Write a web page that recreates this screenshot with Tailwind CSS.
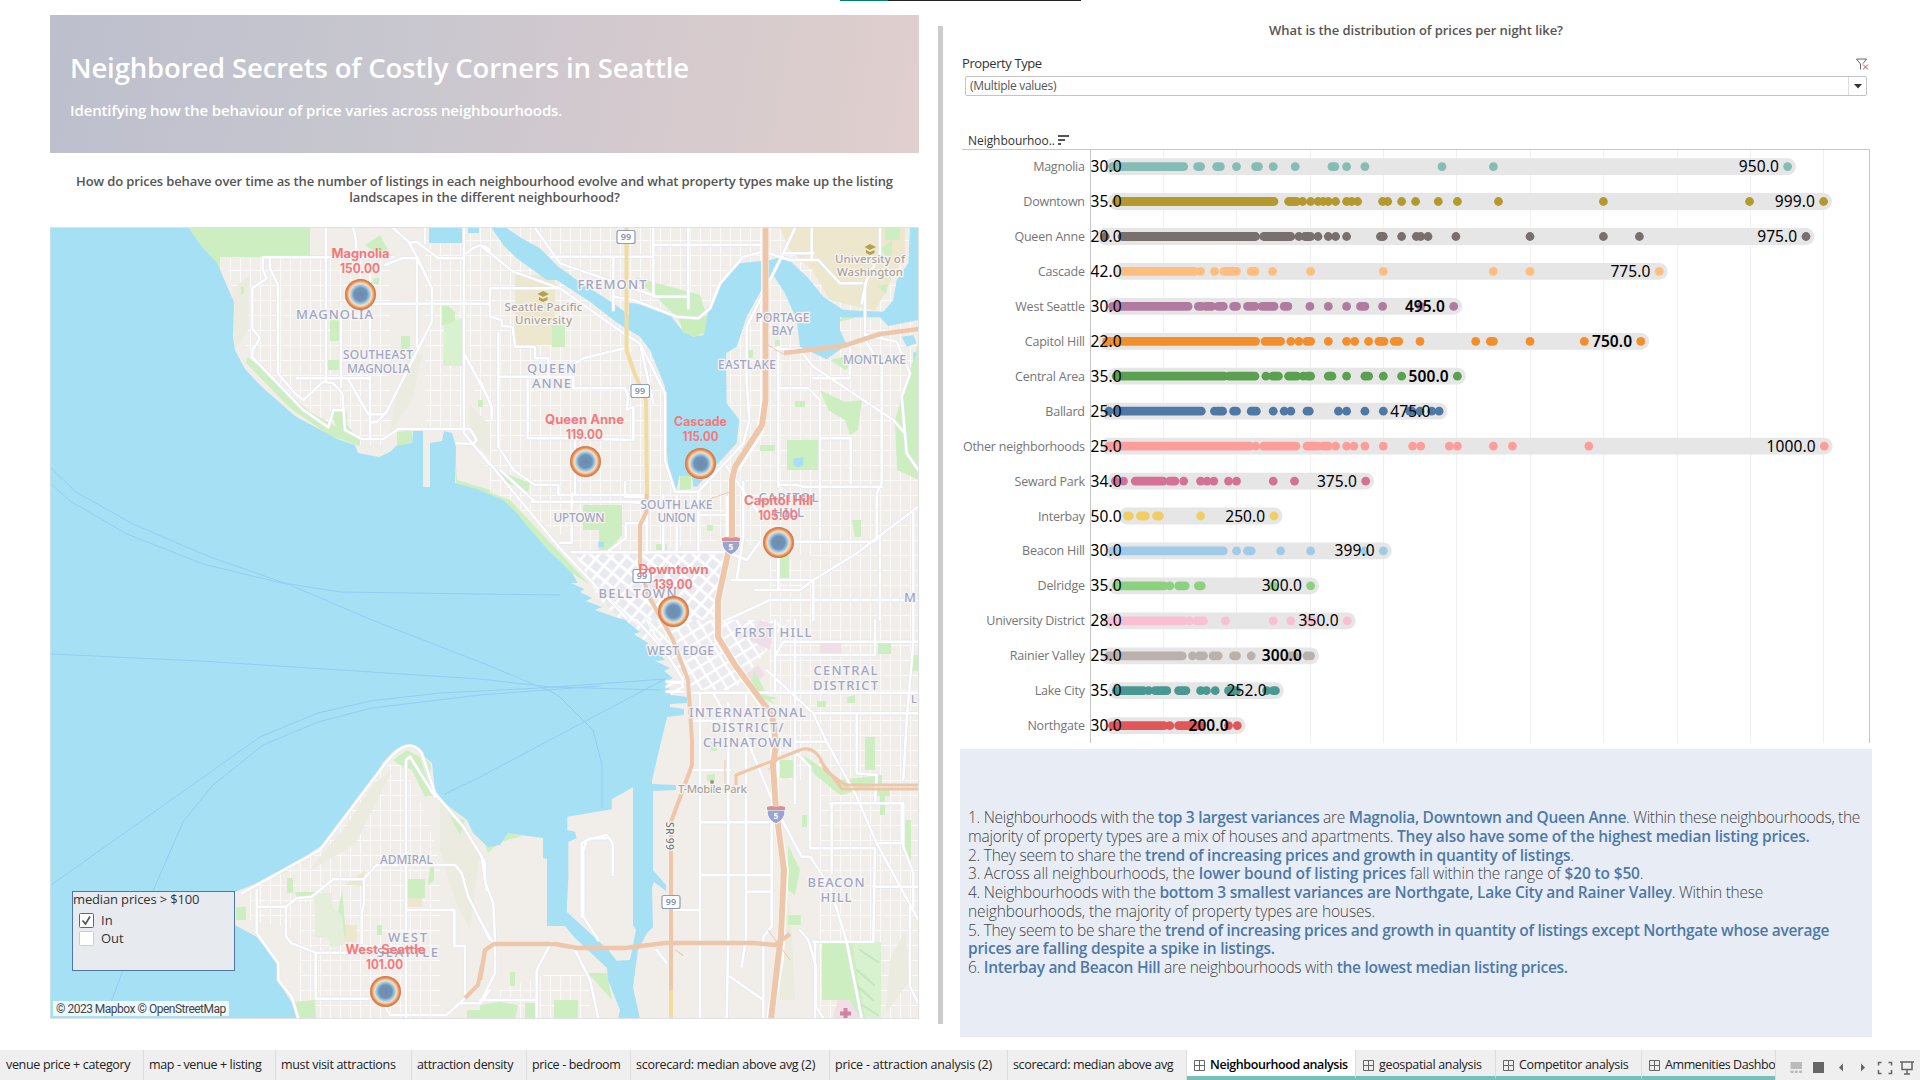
<!DOCTYPE html>
<html lang="en">
<head>
<meta charset="utf-8">
<title>Neighbourhood analysis</title>
<script src="https://cdn.jsdelivr.net/npm/@tailwindcss/browser@4"></script>
</head>
<body class="w-[1920px] h-[1080px] overflow-hidden bg-white flex flex-col font-['Open_Sans','Noto_Sans',sans-serif] text-[#333]">
<div class="flex h-px pl-[840px] shrink-0"><div class="w-12 bg-[#00816f]"></div><div class="w-[193px] bg-[#222]"></div></div>
<main class="flex h-[1049px] shrink-0">
  <section class="ml-[50px] w-[869px] pt-[14px] flex flex-col shrink-0">
    <header class="h-[138px] shrink-0 bg-linear-[100deg,#bdbfcd,#c8c7cf_40%,#d2c9ce_62%,#e0cfcd] text-white pl-5 pt-[33px] flex flex-col items-start whitespace-nowrap">
      <h1 class="text-[27.500px] leading-[40px] font-semibold tracking-[-0.14px]">Neighbored Secrets of Costly Corners in Seattle</h1>
      <p class="mt-[11px] text-[15px] leading-[22px] font-semibold tracking-[-0.13px]">Identifying how the behaviour of price varies across neighbourhoods.</p>
    </header>
    <div class="h-[74px] shrink-0 pt-[20px] text-[13px] leading-4 font-semibold text-[#555] flex flex-col items-center whitespace-nowrap tracking-[-0.13px]">
      <span>How do prices behave over time as the number of listings in each neighbourhood evolve and what property types make up the listing</span>
      <span class="tracking-[-0.08px]">landscapes in the different neighbourhood?</span>
    </div>
    <div class="relative h-[792px] w-[869px] shrink-0">
      <svg class="block" width="869" height="792" viewBox="50 227 869 792" stroke-linejoin="round" stroke-linecap="round">
        <defs>
          <pattern id="grid" width="10" height="15" patternUnits="userSpaceOnUse"><path d="M0 0H10M0 0V15" stroke="#fff" stroke-width="1.5" fill="none"/></pattern>
          <pattern id="diag" width="11" height="11" patternUnits="userSpaceOnUse" patternTransform="rotate(40)"><path d="M0 0H11M0 0V11" stroke="#fff" stroke-width="5.5" fill="none"/></pattern>
          <pattern id="diag2" width="11" height="11" patternUnits="userSpaceOnUse" patternTransform="rotate(58)"><path d="M0 0H11M0 0V11" stroke="#fff" stroke-width="4.5" fill="none"/></pattern>
          <radialGradient id="dot"><stop offset="0" stop-color="#6d8cae"/><stop offset=".42" stop-color="#6f93b8"/><stop offset=".6" stop-color="#a5cbe3"/><stop offset=".7" stop-color="#dfe3dc"/><stop offset=".77" stop-color="#fbc98d"/><stop offset=".87" stop-color="#ee8e52"/><stop offset="1" stop-color="#c2714f"/></radialGradient>
          <g id="roads">
            <g transform="translate(40 220) scale(.33333)">
              <path d="M668 112H1060M668 112V150L680 175L637 205V325L660 355L637 390V412L790 570L865 622L880 570H910M690 112V145L714 195V460L765 520L790 540L850 485L880 490L907 520L915 630L965 657H1030L1075 627H1290L1310 660L1300 672L1250 670M858 24V482M770 475H990M903 250V500M990 140V650M925 478L985 583H1030M1000 251H1350M1131 110V380M1130 110L1176 205V305L1040 575L1010 607H990M1035 135L1085 115H1135M940 24L948 60V112M1060 24L1108 68L1130 110M1108 68L1130 65L1195 115H1272M1155 24V70M1272 24V640L1350 735M1272 400L1350 545M1280 100Q1320 60 1350 90"/>
            </g>
            <g transform="translate(480 220) scale(.33333)">
              <path d="M0 75L100 155L240 205L430 340L480 370L555 520V720L585 815H655L790 670L808 600L800 480V320L905 110L945 24M165 24L240 130L400 185L530 230H625M30 205H220L240 205M30 205V290L65 300V318L98 320L105 380H165V415H205V470H55M55 340V680L100 750L165 795H235V825H500M0 480L35 560V600M213 110H520M400 110V270M520 24V230M520 75H850M625 24V265M400 230L460 240L590 290L655 295L690 265L720 190L790 110L850 95L930 120H1015L1080 190H1145M995 24V120M1145 250L1160 180L1200 100V24M1155 190V345M1155 360L1205 440V790L1190 820V955M1155 345L1250 365L1290 460L1265 530L1280 700L1315 750M895 380V800M865 385L960 390L1000 440L1240 600L1275 640M895 505H985L1020 540V955M1020 655H1112V790M895 795H950L970 800H1205M1110 380V475H1000M480 370L500 460L520 550M0 695L240 985L440 1195M60 750L165 845H500M285 655V820M143 480V655H285L460 660V560L440 570L445 530L435 505H280V470H205M285 430L310 415L435 385M155 845H430L500 850M275 997H745M240 968H275V820M435 785V830H500M500 910H437V955L380 997M550 825V990M590 825V995M655 820V998M655 885H740M740 830V960M500 850V1000M790 785V950L770 1080M755 1080H1000L1130 1000L1315 860M870 965H1180L1190 960M745 998L800 1020L840 965M740 740L850 900M865 1140H1315M895 1000V1110M825 1110H960L1000 1080M1200 950V1200M1000 1080V1200M1300 870V1200M740 1200L870 1140M910 100H1000"/>
            </g>
            <g transform="translate(40 620) scale(.33333)">
              <path d="M605 820L840 690L1040 425Q1105 345 1145 400L1185 520L1270 620L1325 710L1340 810M1098 1195V420L1110 410L1185 530M650 810V940L715 1030V1080L755 1130L775 1195M650 860H738L770 835L815 830L880 778H970L1010 735H1245L1265 760L1285 830L1350 960M972 778V850L965 880V970M738 860V950L755 970L827 998H1010M827 998V1136H1030M1100 870H1243V978H1275V1130M1030 1150L1050 1185H1220L1280 1130M1260 1150H1320L1350 1110"/>
            </g>
            <g transform="translate(480 620) scale(.33333)">
              <path d="M0 700L15 730V785L40 850L45 960V1060L0 1150M0 900L40 970M0 1140H170M170 1195V1050L215 965L285 990L330 1080L355 1195M355 960L310 890V690L320 660L380 645L398 670V765M380 655L330 655L305 670V890M660 220V1195M745 250V940L740 1195M798 220V955L785 1040M875 550V920L850 950V1195M630 218H1315M640 450H750M665 607H870M665 765H875M800 815H875M580 870H655M640 302H745M798 350L830 430L885 560L965 710H990L1050 800L1100 965L1145 1195M945 365H1040M885 0V215M860 150L1000 280L1040 365L1130 530L1190 670L1315 900M1185 0V105H890M890 100L910 65H1315M1000 280H1315M1050 550H1265V670H1190M990 685H1185L1180 960M990 685V440L950 400M1055 550V760M1300 0V65L1280 300L1270 480M1130 285V460L1190 465L1185 550M1315 800H1180M1000 965H1180M1005 970V1195M750 1070L850 1140M960 930L985 960L1008 1040V1160L1030 1195M530 990L560 1030M1290 860V1100L1315 1150M1270 550V680L1300 760V860M560 185H610M560 215H610M560 200Q600 175 610 200L575 220M700 220L745 300M470 0L560 100L610 180M500 0L590 90M945 0V550"/>
            </g>
          </g>
        </defs>
        <rect x="50" y="227" width="869" height="792" fill="#f1eeea"/>
        <!-- minor street grids -->
        <path fill="url(#grid)" d="M225 258H390V445H340L250 365ZM450 228H919V560H840L720 540L600 560L490 490ZM330 790L400 760L420 800L440 860V1019H300V930L250 920V890ZM770 560H919V1019H820V780H770ZM545 975H590V1019H500V990ZM425 228H465V430H425Z"/>
        <path fill="#ebebdf" d="M372 785L392 770L380 795L355 845L310 870L325 850L345 828ZM440 800L460 815L480 850L470 930L455 900L440 850ZM232 290L250 275L248 330L235 350ZM410 350L422 355L412 400L395 425L390 435L394 405ZM470 405L490 425V455L470 440ZM780 860L790 900L795 1000H780ZM890 960L905 930L910 980L885 1015Z"/>
        <!-- downtown street grid -->
        <path fill="#e9e9f0" d="M575 553H730L700 635L650 640L610 610Z"/>
        <path fill="url(#diag)" d="M575 553H730L712 640H640L600 600Z"/>
        <path fill="#ecebef" d="M645 620H780L735 690H690Z"/><path fill="url(#diag2)" d="M645 620H790L735 690H690Z"/>
        <!-- campuses, plazas -->
        <path fill="#ece7cd" d="M780 228H905V255L875 311L830 300L812 270L790 250ZM515 275H555V345H515ZM345 885L365 870V886ZM345 925H357V942H342ZM408 895H422V907H408Z"/>
        <path fill="#f0dfe6" d="M750 640L760 620L775 625L770 650ZM745 675L758 665L765 675L752 685ZM820 642H841V654H820ZM838 1000H862V1019H832Z"/>
        <!-- parks -->
        <g fill="#cdeec0">
          <path d="M188 227H310V257H220V275L200 245Z"/>
          <path d="M248 357L310 412L360 440V446L330 436L290 408L246 363ZM330 412H347V425L358 438L345 440L338 430ZM397 432L412 430V443L397 447ZM330 320H339V341H330ZM328 360H340V370H328ZM241 287H244V294H241ZM401 336H410V350H401ZM442 306H449L455 312V325H442ZM365 245L380 235L388 250L375 252ZM374 278H380L378 285L372 283ZM478 400H483V407H478Z"/>
          <path d="M552 325H565V347H552ZM497 470L530 483L528 492L505 482ZM480 489L510 500L590 585L560 565L520 520L480 495ZM455 450L457 480L490 490V496L456 484ZM583 505H622V535L610 550H599V530H583ZM656 544H667V550H656ZM707 525H713V531H707ZM748 350H753V358H748ZM787 440H820V470H787ZM795 401H805V407H795ZM852 520H861V537H855ZM780 555H789V578H780ZM820 390L845 402L862 400L858 430L850 435L845 420L828 410ZM895 420L919 340V480L897 470ZM845 370L862 360L850 355L830 360ZM848 310L838 322L855 318ZM680 472H687V490H680ZM760 445H775V451H760ZM775 340H780V346H775ZM880 250L892 240V260ZM878 286L888 284L886 294ZM885 228H900V240H885ZM635 277L700 295L705 310L700 335L688 335L680 320ZM555 262L600 300L580 285Z"/>
          <path d="M835 942H880V1019H860L850 1000H822V942ZM780 760H793V778H780ZM788 845L800 870L795 895L788 890ZM788 915H801V925H788ZM803 755L840 780L882 775V785L840 795L815 775ZM865 737H875V770H865ZM878 643H891V654H878ZM912 655H919V671H912ZM905 820H911V861L905 850ZM880 795H885V815H880ZM877 790H890V796H877ZM817 701H826V707H817ZM847 697L855 695V703H847ZM802 815H807V827H802ZM707 775L715 774V781H707ZM711 742H717V751H711ZM754 670L768 697L775 705L750 690ZM763 695L778 698L770 700ZM484 840L510 833L522 836L500 842L488 853ZM480 1005L500 1002L518 1005L515 1019H480ZM525 1003H535V1019H525ZM554 1000H578V1019H554ZM588 973H607L612 1000ZM510 972H515V986H510Z"/>
          <path d="M393 760L407 750L420 757L433 795L425 797L412 770L400 765ZM425 757L431 765L430 775ZM236 892L280 872L320 845L285 872ZM287 878H293V893H287ZM408 879H425V898H408ZM430 867H434V880L428 886ZM236 907H246V920H236ZM377 925H382V935H377ZM293 1002L315 1000L316 1019H297ZM467 1010H490V1019H467ZM450 817L465 820L460 835ZM295 892H316L315 897H297ZM342 890L346 935L340 946L332 945Z"/>
        </g>
        <path fill="#e4eedb" d="M313 893H332V907L342 915L345 945L330 947L329 938L315 937V908Z"/>
        <path fill="#d8f1cf" d="M444 325L462 318V366H443ZM852 942H881V1018H865Z"/>
        <path stroke="#b9e3b0" stroke-width="2" fill="none" opacity=".7" d="M860 950L878 962M857 970L874 985M856 985L873 1000M862 1005L878 1015"/>
        <!-- water -->
        <g fill="#a6e0f5">
          <path d="M50 227H188L202 247L217 263L234 302L233 337L235 350L245 369L262 387L295 416L337 439L355 445L358 453L379 457L390 452L396 446L412 443L413 431H423V487H430V443L442 441L444 431L452 433L456 447L455 483L477 489L503 500L517 513L527 526L548 550L572 573L578 583H571L584 589L580 592L592 598L586 601L602 607L595 610L612 616L625 620L640 632L634 634L648 643L645 647L658 652L665 660L655 661L670 668L664 671L673 678L666 682L672 695L687 697V703L670 704V707L684 709V715L667 717L652 780V784L676 785V790L653 791V870L666 885V891L654 882L652 887L653 927L647 933L638 950L633 987L640 1019H618L620 1010L608 980L607 968L575 938L565 926H547V859L543 858V838L520 835L508 833L500 845L488 847L473 833L467 820L443 802L435 790L432 763L425 757L420 748L407 745L395 750L383 762L372 783L327 842L280 873L235 892V925L257 937L278 963L277 980L292 1003L297 1019H50Z"/>
          <path transform="translate(480 220) scale(.33333)" d="M35 24H80L125 55L180 85L235 140L290 180L400 250L447 285V248L520 258L570 285L610 335L640 350L670 345L685 270L720 190L780 130L870 120L915 108L985 175L1030 230L1090 270L1210 275L1240 240L1250 180L1285 130L1290 24H1315V300L1225 318L1200 292H1080V330L1100 375L1040 418L960 380L950 300L915 220L880 165L855 190L800 290L770 380L738 400L740 550L778 600L770 670L650 800H640L635 768H598L590 808L568 770L555 640V500L510 390L480 350L430 320L400 300L330 245L230 180H200L110 115L70 75ZM940 715L970 712V735L955 742L940 735ZM355 965H372V982H355ZM1265 350L1300 345L1310 370L1280 380ZM1300 395L1310 400L1300 425Z"/>
          <path d="M429 227H462V243H429ZM468 227H479V233H468Z"/>
        </g>
        <path transform="translate(480 620) scale(.33333)" fill="#f1eeea" d="M262 590L395 568V538L459 502V915L468 930L450 1020L410 1022L385 990L260 875L265 770V665L290 655L285 635L262 630Z"/>
        <path fill="#c9eebc" d="M677 315L693 320L707 315L705 332L695 337L683 332ZM680 476H691V489H680Z"/>
        <!-- ferry routes -->
        <g fill="none" stroke="#97cbf0" stroke-width="1">
          <path d="M51 468L76 492L133 524L205 555L290 585L372 620L490 666L552 692L560 697L593 730L602 765V808"/>
          <path d="M51 484L70 501L127 534L203 564L277 582L340 592L480 594L560 595"/>
          <path d="M51 654L200 661L480 679L550 687L660 690M51 885L260 737L318 713L370 701L440 693L540 688L665 679M105 1018L153 891L183 822L212 786L263 745L318 722L372 708L480 695L600 686M445 794L480 777L665 679"/>
        </g>
        <use href="#roads" fill="none" stroke="#e2e4ef" stroke-width="11"/>
        <use href="#roads" fill="none" stroke="#fff" stroke-width="7.5"/>
        <!-- highways -->
        <path fill="none" stroke="#f0dca0" stroke-width="4" d="M626.500 228V350L634 372L646 400L647 496M671 988V1018"/>
        <path fill="none" stroke="#fff" stroke-linecap="butt" stroke-width="7.500" d="M765 228V400L760 432L735 470L732 480V535L718 600V640L772 718L775 762V810L785 870L780 960L770 1019"/>
        <g fill="none" stroke="#eec7ab" stroke-linecap="butt">
          <path stroke-width="6" d="M765.500 228V400L762 425L735 467L732 480V535L718 600V637L735 665L772 715L776 745L773 765L776 810L784 870L781 935L771 1019"/>
          <path stroke-width="4" d="M646.500 494V512L640 525V565L648 595L673 640L688 680L692 740V765L671 822V990"/>
          <path stroke-width="4.500" d="M784 353L843 346L880 334L919 329M480 980L485 950L494 944H555L577 948H625L665 943H754L775 945L790 934"/>
          <path stroke-width="3" d="M736 785V775L775 760L800 750Q817 744 825 770L845 785H919M820 760L842 789H919"/>
          <path stroke-width="4" d="M465 998L478 985L482 965"/>
          <path stroke-width="1" d="M707 500L735 490M768 345L785 355M725 760V785M768 770L783 755M768 930L790 960M675 950Q690 960 678 952"/>
        </g>
        <!-- shields -->
        <g fill="#fff" stroke="#8f9bbd" stroke-width="1.2"><rect x="617" y="230.500" width="18" height="13" rx="2"/><rect x="631" y="384.500" width="18.500" height="13" rx="2"/><rect x="633" y="569.500" width="18" height="13" rx="2"/><rect x="662" y="895.500" width="18" height="13" rx="2"/></g>
        <g class="font-['Noto_Sans',sans-serif]" font-size="9" font-weight="600" fill="#858fb2" text-anchor="middle"><text x="626" y="240">99</text><text x="640" y="394">99</text><text x="642" y="579">99</text><text x="671" y="905">99</text></g>
        <g id="i5"><path fill="#9aa4d4" stroke="#fff" d="M722 541H740Q741 550 731 555Q721 550 722 541Z"/><path fill="#d58f95" d="M722 538L726 537L731 538L736 537L740 538V541H722Z"/><text x="731" y="550" text-anchor="middle" font-size="8.500" font-weight="700" fill="#fff">5</text></g>
        <use href="#i5" x="45" y="269"/>
        <path fill="#cc86a2" d="M843.500 1008H847.500V1011.500H851V1015.500H847.500V1019H843.500V1015.500H840V1011.500H843.500Z"/>
        <circle cx="712" cy="782" r="2" fill="#a19080"/>
        <g fill="#b5a050" id="cap"><path d="M537.500 294L543 291L549 294L543 297ZM539 297L543 299L547.500 297V300L543 302L539 300Z"/></g><use href="#cap" x="327" y="-47"/>
        <!-- place names -->
        <g class="font-['Noto_Sans',sans-serif]" fill="#a0a5c4" stroke="#f7f5f4" stroke-width="2.500" paint-order="stroke" font-size="13" text-anchor="middle" font-weight="500">
          <text x="334.500" y="319" textLength="77">MAGNOLIA</text>
          <text x="612" y="288.500" textLength="69">FREMONT</text>
          <text x="551.500" y="372.500" textLength="49">QUEEN</text><text x="551.500" y="387.500" textLength="39">ANNE</text>
          <text x="788.500" y="502" textLength="60">CAPITOL</text><text x="788.500" y="517" textLength="31">HILL</text>
          <text x="637.500" y="598" textLength="78">BELLTOWN</text>
          <text x="773" y="637" textLength="77">FIRST HILL</text>
          <text x="845.500" y="675" textLength="64">CENTRAL</text><text x="845.500" y="690" textLength="65">DISTRICT</text>
          <text x="747.500" y="716.500" textLength="117">INTERNATIONAL</text><text x="747.500" y="732" textLength="72">DISTRICT/</text><text x="747.500" y="747" textLength="89">CHINATOWN</text>
          <text x="836" y="886.500" textLength="57">BEACON</text><text x="836" y="902" textLength="31">HILL</text>
          <text x="407.500" y="942" textLength="39">WEST</text><text x="407.500" y="957" textLength="61">SEATTLE</text>
          <text x="910" y="602">M</text><text x="914" y="703" font-size="11">L</text>
          <g font-size="12"><text x="378" y="359" textLength="70">SOUTHEAST</text><text x="378.500" y="372.500" textLength="63">MAGNOLIA</text>
          <text x="782.500" y="321.500" textLength="54">PORTAGE</text><text x="782.500" y="334.500" textLength="22">BAY</text>
          <text x="747" y="369" textLength="58">EASTLAKE</text><text x="874.500" y="364" textLength="63">MONTLAKE</text>
          <text x="579" y="522" textLength="51">UPTOWN</text><text x="676.500" y="508.500" textLength="72">SOUTH LAKE</text><text x="676.500" y="522" textLength="38">UNION</text>
          <text x="680.500" y="655" textLength="67">WEST EDGE</text><text x="406.500" y="864" textLength="53">ADMIRAL</text></g>
          <g font-size="11.500" fill="#ada196"><text x="543.500" y="310.500" textLength="78">Seattle Pacific</text><text x="543.500" y="323.500" textLength="57">University</text>
          <text x="870" y="263" textLength="70">University of</text><text x="870" y="276" textLength="66">Washington</text><text x="712.500" y="793" textLength="69">T-Mobile Park</text></g>
          <text transform="translate(666 836) rotate(90)" font-size="10.500" fill="#777" textLength="28">SR 99</text>
        </g>
        <!-- median price markers -->
        <g fill="url(#dot)"><circle cx="360.500" cy="294.500" r="15.500"/><circle cx="585.500" cy="461.500" r="15.500"/><circle cx="700.500" cy="463.500" r="15.500"/><circle cx="778.500" cy="542.500" r="15.500"/><circle cx="673.500" cy="611.500" r="15.500"/><circle cx="385.500" cy="991.500" r="15.500"/></g>
        <g class="font-['Inter',sans-serif]" fill="#f4797b" font-size="12.500" font-weight="700" text-anchor="middle">
          <text x="360.500" y="258" textLength="58" lengthAdjust="spacingAndGlyphs">Magnolia</text><text x="360" y="273" textLength="40" lengthAdjust="spacingAndGlyphs">150.00</text>
          <text x="584.500" y="424" textLength="79" lengthAdjust="spacingAndGlyphs">Queen Anne</text><text x="584.500" y="439" textLength="37" lengthAdjust="spacingAndGlyphs">119.00</text>
          <text x="700.500" y="426" textLength="53" lengthAdjust="spacingAndGlyphs">Cascade</text><text x="700.500" y="441" textLength="36" lengthAdjust="spacingAndGlyphs">115.00</text>
          <text x="778.500" y="505" textLength="69" lengthAdjust="spacingAndGlyphs">Capitol Hill</text><text x="778" y="520" textLength="40" lengthAdjust="spacingAndGlyphs">105.00</text>
          <text x="673.500" y="574" textLength="70" lengthAdjust="spacingAndGlyphs">Downtown</text><text x="673" y="589" textLength="39" lengthAdjust="spacingAndGlyphs">139.00</text>
          <text x="385.500" y="954" textLength="80" lengthAdjust="spacingAndGlyphs">West Seattle</text><text x="384.500" y="969" textLength="37" lengthAdjust="spacingAndGlyphs">101.00</text>
        </g>
        <rect x="50.500" y="227.500" width="868" height="791" fill="none" stroke="#dfe1e3"/>
      </svg>
      <div class="absolute left-[22px] top-[664px] w-[163px] h-20 bg-[#e7ebf0] border border-[#4e79a7] text-[13px] leading-[18px] whitespace-nowrap flex flex-col items-start">
        <span class="leading-[15px] tracking-[-0.15px]">median prices &gt; $100</span>
        <label class="mt-1 ml-1.5 flex gap-[7px] items-center"><svg width="15" height="15" viewBox="0 0 15 15"><rect x=".5" y=".5" width="14" height="14" rx="1" fill="#fff" stroke="#666"/><path d="M3.500 7.500L6.500 11L11 3.500" fill="none" stroke="#555" stroke-width="1.700"/></svg>In</label>
        <label class="ml-1.5 flex gap-[7px] items-center"><svg width="15" height="15" viewBox="0 0 15 15"><rect x=".5" y=".5" width="14" height="14" rx="1" fill="#fff" stroke="#ccc"/></svg>Out</label>
      </div>
      <div class="absolute left-[3px] top-[774px] w-44 h-[15px] pl-[3px] bg-white/80 font-[Roboto,sans-serif] text-[12px] leading-[17px] tracking-[-0.5px] text-[#444] whitespace-nowrap">© 2023 Mapbox © OpenStreetMap</div>
    </div>
  </section>
  <div class="ml-[19px] mt-[25px] w-[5px] h-[998px] bg-[#ccc] shrink-0"></div>
  <section class="ml-[17px] w-[912px] flex flex-col shrink-0">
    <h2 class="h-[57px] pt-[19px] text-[13px] leading-5 font-semibold text-[#555] text-center whitespace-nowrap tracking-[-0.06px]">What is the distribution of prices per night like?</h2>
    <div class="flex justify-between h-[18px] pl-0.5 pr-[3px] shrink-0 leading-[11px] text-[13px] tracking-[-0.4px]">
      <span>Property Type</span>
      <svg width="13" height="13" viewBox="0 0 13 13" fill="none" stroke="#666"><path d="M.5 1H10.500L7 5.500M.5 1L4.500 6V11.500"/><path stroke="#c44" d="M7 6.500L12 11.500M12 6.500L7 11.500"/></svg>
    </div>
    <div class="ml-[5px] w-[902px] h-[20px] shrink-0 border border-[#c4c4c4] rounded-[2px] flex items-center justify-between text-[12px] text-[#555] leading-[18px]">
      <span class="pl-1 tracking-[-0.3px]">(Multiple values)</span>
      <span class="w-[18px] h-full border-l border-[#ddd] flex items-center justify-center"><svg width="8" height="5"><path d="M0 0H8L4 4.500Z" fill="#333"/></svg></span>
    </div>
    <div class="h-[53px] shrink-0 pl-2 pt-[38px] flex gap-1 text-[12px] leading-[14px] tracking-[-0.05px]"><span>Neighbourhoo..</span>
      <svg class="mt-px -ml-px" width="11" height="10" fill="#555"><path d="M0 0H11V2H0ZM0 4H7V6H0ZM0 8H3V10H0Z"/></svg></div>
    <svg id="chart" class="block shrink-0" width="912" height="595" viewBox="960 149 912 595"></svg>
    <div class="mt-[5px] h-[288px] shrink-0 bg-[#e8edf5] pl-2 pt-[59px] text-[15.500px] leading-[18.750px] font-light text-[#444] whitespace-nowrap flex flex-col items-start [&_b]:font-semibold [&_b]:text-[#4e79a7]">
      <span class="tracking-[-0.31px]">1. Neighbourhoods with the <b>top 3 largest variances</b> are <b>Magnolia, Downtown and Queen Anne</b>. Within these neighbourhoods, the</span>
      <span class="tracking-[-0.22px]">majority of property types are a mix of houses and apartments. <b>They also have some of the highest median listing prices.</b></span>
      <span class="tracking-[-0.26px]">2. They seem to share the <b>trend of increasing prices and growth in quantity of listings</b>.</span>
      <span class="tracking-[-0.15px]">3. Across all neighbourhoods, the <b>lower bound of listing prices</b> fall within the range of <b>$20 to $50</b>.</span>
      <span class="tracking-[-0.25px]">4. Neighbourhoods with the <b>bottom 3 smallest variances are Northgate, Lake City and Rainer Valley</b>. Within these</span>
      <span class="tracking-[-0.13px]">neighbourhoods, the majority of property types are houses.</span>
      <span class="tracking-[-0.30px]">5. They seem to be share the <b>trend of increasing prices and growth in quantity of listings except Northgate whose average</b></span>
      <span class="tracking-[-0.24px]"><b>prices are falling despite a spike in listings.</b></span>
      <span class="tracking-[-0.29px]">6. <b>Interbay and Beacon Hill</b> are neighbourhoods with <b>the lowest median listing prices.</b></span>
    </div>
  </section>
</main>
<nav class="h-[30px] shrink-0 bg-[#efefef] flex text-[12.500px] leading-[26px] text-[#222] whitespace-nowrap tracking-[-0.33px]">
  <div class="w-[144px] pl-1.5 pt-0.5 border-r border-[#ddd]">venue price + category</div>
  <div class="w-[132px] pl-[5px] pt-0.5 border-r border-[#ddd] tracking-[-0.38px]">map - venue + listing</div>
  <div class="w-[136px] pl-[5px] pt-0.5 border-r border-[#ddd]">must visit attractions</div>
  <div class="w-[115px] pl-[5px] pt-0.5 border-r border-[#ddd]">attraction density</div>
  <div class="w-[104px] pl-[5px] pt-0.5 border-r border-[#ddd]">price - bedroom</div>
  <div class="w-[199px] pl-[5px] pt-0.5 border-r border-[#ddd] tracking-[-0.27px]">scorecard: median above avg (2)</div>
  <div class="w-[178px] pl-[5px] pt-0.5 border-r border-[#ddd] tracking-[-0.2px]">price - attraction analysis (2)</div>
  <div class="w-[179px] pl-[5px] pt-0.5 border-r border-[#ddd] tracking-[-0.35px]">scorecard: median above avg</div>
  <div class="w-[168px] pl-[7px] flex gap-[5px] bg-white border-b-4 border-[#76bfba] font-semibold text-black leading-[30px] tracking-[-0.4px]"><svg class="mt-[10px] shrink-0" width="11" height="11" fill="none" stroke="#666"><path id="db" d="M.5.5H10.500V10.500H.5ZM5.500.5V10.500M.5 5.500H10.500"/></svg>Neighbourhood analysis</div>
  <div class="w-[140px] pl-[7px] flex gap-[5px] border-b-4 border-b-[#76bfba] border-l border-l-[#ddd] leading-[30px]"><svg class="mt-[10px] shrink-0" width="11" height="11" fill="none" stroke="#666"><use href="#db"/></svg>geospatial analysis</div>
  <div class="w-[146px] pl-[7px] flex gap-[5px] border-b-4 border-b-[#76bfba] border-l border-l-[#ddd] leading-[30px]"><svg class="mt-[10px] shrink-0" width="11" height="11" fill="none" stroke="#666"><use href="#db"/></svg>Competitor analysis</div>
  <div class="w-[134px] pl-[7px] flex gap-[5px] overflow-hidden border-b-4 border-b-[#76bfba] border-l border-l-[#ddd] leading-[30px] tracking-[-0.42px]"><svg class="mt-[10px] shrink-0" width="11" height="11" fill="none" stroke="#666"><use href="#db"/></svg>Ammenities Dashbo</div>
  <svg width="145" height="30" viewBox="1775 1050 145 30" fill="#666"><path d="M1775 1050H1776V1080H1775Z" fill="#ddd"/><path fill="#bbb" d="M1790.500 1062H1802V1069H1790.500ZM1790.500 1070.500H1793.500V1073H1790.500ZM1794.700 1070.500H1797.700V1073H1794.700ZM1799 1070.500H1802V1073H1799Z"/><path d="M1813 1062H1824V1073H1813ZM1843 1063.500V1071.500L1839 1067.500ZM1861 1063.500V1071.500L1865 1067.500Z"/><path fill="none" stroke="#666" stroke-width="1.500" d="M1878.500 1065.500V1062.500H1881.500M1888.500 1062.500H1891.500V1065.500M1891.500 1070V1073.500H1888.500M1881.500 1073.500H1878.500V1070M1900 1062H1914M1902 1062V1069.500H1912V1062M1907 1069.500V1073.500M1904 1074H1910"/></svg>
</nav>
<script>
// [name, colour, min, max, bold max label, prices]; a nested pair is a continuous run of prices
const rows = [
 ['Magnolia','#86bcb6',30,950,0,[[30,127],[146,150],[172,177],199,[225,229],249,279,[329,333],349,374,479,549,950]],
 ['Downtown','#b6992d',35,999,0,[[35,250],[270,281],289,300,310,317,324,334,349,356,364,398,405,424,443,474,500,556,699,898,999]],
 ['Queen Anne','#79706e',20,975,0,[20,[43,225],[236,273],284,[292,300],310,324,334,349,[395,399],424,444,450,460,498,599,699,748,975]],
 ['Cascade','#ffbe7d',42,775,0,[[45,142],150,169,[182,199],[219,224],248,300,399,549,599,775]],
 ['West Seattle','#b07aa1',30,495,1,[[30,133],[147,151],[157,165],[174,181],[195,199],[214,224],[234,250],[264,269],299,324,349,[368,374],398,450,495]],
 ['Capitol Hill','#f28e2b',22,750,1,[[22,225],[238,259],273,284,[295,300],324,349,360,379,[393,400],[414,420],449,525,[545,549],599,673,750]],
 ['Central Area','#59a14f',35,500,1,[[35,182],[189,224],239,[248,256],[270,281],290,[296,300],[324,329],349,[374,379],399,424,500]],
 ['Ballard','#4e79a7',25,475,0,[25,[35,151],169,[173,180],[195,199],[219,226],249,264,273,[295,298],338,349,374,399,[435,438],449,465,475]],
 ['Other neighborhoods','#ff9d9a',25,1000,0,[[25,217],225,[236,280],[295,306],310,[317,324],334,349,359,374,399,439,450,489,500,549,575,679,1000]],
 ['Seward Park','#d37295',34,375,0,[34,45,[61,99],[108,115],127,150,159,168,188,199,249,278,375]],
 ['Interbay','#f1ce63',50,250,0,[[50,53],[68,75],[90,94],150,250]],
 ['Beacon Hill','#a0cbe8',30,399,0,[[30,181],199,[214,219],259,300,374,399]],
 ['Delridge','#8cd17d',35,300,0,[[35,100],108,[120,129],[147,151],249,300]],
 ['University District','#fabfd2',28,350,0,[[28,127],135,[145,154],184,249,273,[297,304],350]],
 ['Rainier Valley','#bab0ac',25,300,1,[[25,125],139,[148,154],[167,174],[195,199],219,[272,278],295,300]],
 ['Lake City','#499894',35,252,0,[[35,72],79,[88,104],[120,130],150,158,170,[188,199],240,[249,252]]],
 ['Northgate','#e15759',30,200,1,[[30,100],108,[120,150],188,200]]
];
const X = v => (1090.5 + v * 0.7338).toFixed(1);
let s = '';
for (let g = 100; g <= 1000; g += 100) s += `<path d="M${Math.round(X(g)) - .5} 150V743" stroke="#f0f0f0"/>`;
s += '<path d="M962 149.500H1869.500V743M1090.500 150V743" fill="none" stroke="#c6c6c6"/>';
rows.forEach(([name, color, min, max, bold, pts], i) => {
  const y = (166.6 + i * 34.94).toFixed(1);
  s += `<path d="M${X(min)} ${y}H${X(max)}" stroke="#e6e6e6" stroke-width="16.800" stroke-linecap="round"/>`;
  s += `<g stroke="${color}" stroke-width="8.800" stroke-linecap="round">` + pts.map(p => `<path d="M${X(p[0] ?? p)} ${y}H${+X(p[1] ?? p) + .01}"/>`).join('') + '</g>';
  s += `<text x="1084.800" y="${+y + 4.5}" font-size="12.500" fill="#757575" letter-spacing="-.22" text-anchor="end">${name}</text>`;
  s += `<text x="1090.500" y="${+y + 5.500}" font-size="15.500" fill="#000" textLength="31" font-family="Noto Sans">${min}.0</text>`;
  s += `<text x="${X(max) - 8.8}" y="${+y + 5.500}" font-size="15.500" fill="#000" font-weight="${bold ? 600 : 400}" text-anchor="end" textLength="${max > 999 ? 49 : 40}" font-family="Noto Sans">${max}.0</text>`;
});
document.getElementById('chart').innerHTML = s;
</script>
</body>
</html>
